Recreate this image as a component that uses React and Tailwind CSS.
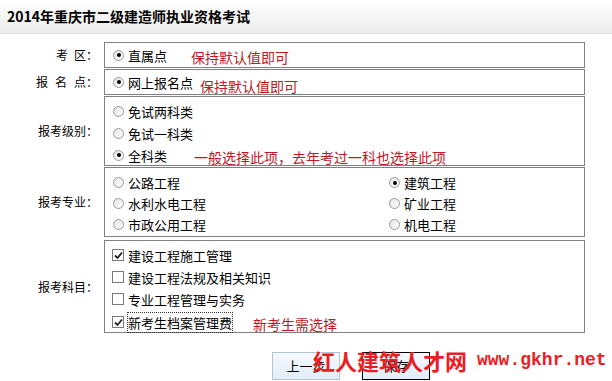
const Radio = ({ checked }) => (
  <span className="w-[11px] h-[11px] rounded-full border border-[#9a9a9a] bg-gradient-to-br from-[#e4e4e4] to-white flex items-center justify-center shrink-0">
    {checked && <span className="w-[4px] h-[4px] rounded-full bg-black" />}
  </span>
);

const Check = ({ checked }) => (
  <span className="w-[12px] h-[12px] border border-[#7a7a7a] bg-white flex items-center justify-center shrink-0">
    {checked && (
      <svg width="9" height="9" viewBox="0 0 9 9">
        <path d="M1 4.5 L3.5 7 L8 1.5" stroke="#222" strokeWidth="1.8" fill="none" />
      </svg>
    )}
  </span>
);

const Option = ({ type = 'radio', checked, label, dotted, h = 'h-[22px]' }) => (
  <div className={`flex items-center gap-[4px] ${h}`}>
    {type === 'radio' ? <Radio checked={checked} /> : <Check checked={checked} />}
    <span className={`text-[13px] text-black leading-none ${dotted ? 'outline-1 outline-dotted outline-[#333] py-[3px]' : ''}`}>{label}</span>
  </div>
);

const Note = ({ children, className = '' }) => (
  <span className={`text-[14px] text-[#c0181f] leading-none ${className}`}>{children}</span>
);

const Row = ({ label, box, className = '', children }) => (
  <div className={`flex ${className}`}>
    <div className="w-[104px] pr-[6px] flex items-center justify-end text-[12px] text-black">{label}</div>
    <div className={`w-[481px] border border-[#808080] bg-white ${box}`}>{children}</div>
  </div>
);

export default function App() {
  return (
    <div className="relative w-[612px] h-[381px] bg-white overflow-hidden" style={{ fontFamily: '"Noto Sans CJK SC", "Liberation Sans", sans-serif' }}>
      <div className="h-[34px] bg-gradient-to-b from-white to-[#ececec] border-b border-[#dedede] flex items-center pl-[7px]">
        <h1 className="text-[14px] font-bold text-black">2014年重庆市二级建造师执业资格考试</h1>
      </div>

      <div className="mt-[8px] flex flex-col gap-[1px]">
        <Row label={<><span className="tracking-[6px]">考</span>区：</>} box="h-[26px] flex items-center pl-[8px]">
          <Option checked label="直属点" />
          <Note className="ml-[24px] mt-[3px]">保持默认值即可</Note>
        </Row>
        <Row label={<><span className="tracking-[7px]">报名</span>点：</>} box="h-[26px] flex items-center pl-[8px]">
          <Option checked label="网上报名点" />
          <Note className="ml-[7px] mt-[8px]">保持默认值即可</Note>
        </Row>
        <Row label="报考级别：" box="h-[70px] pl-[8px] pt-[3px]">
          <Option label="免试两科类" />
          <Option label="免试一科类" />
          <div className="flex items-center">
            <Option checked label="全科类" />
            <Note className="ml-[27px] mt-[4px]">一般选择此项，去年考过一科也选择此项</Note>
          </div>
        </Row>
        <Row label="报考专业：" box="h-[70px] pl-[8px] pt-[4px] flex">
          <div className="w-[276px]">
            <Option label="公路工程" h="h-[21px]" />
            <Option label="水利水电工程" h="h-[21px]" />
            <Option label="市政公用工程" h="h-[21px]" />
          </div>
          <div>
            <Option checked label="建筑工程" h="h-[21px]" />
            <Option label="矿业工程" h="h-[21px]" />
            <Option label="机电工程" h="h-[21px]" />
          </div>
        </Row>
        <Row label="报考科目：" box="h-[93px] pl-[7px] pt-[3px]" className="mt-[2px]">
          <Option type="check" checked label="建设工程施工管理" />
          <Option type="check" label="建设工程法规及相关知识" />
          <Option type="check" label="专业工程管理与实务" />
          <div className="flex items-center mt-[1px]">
            <Option type="check" checked dotted label="新考生档案管理费" />
            <Note className="ml-[21px] mt-[4px]">新考生需选择</Note>
          </div>
        </Row>
      </div>

      <div className="mt-[19px] flex gap-[22px] pl-[272px]">
        <button className="w-[68px] h-[28px] border border-[#b5c3d0] bg-gradient-to-b from-[#f4f9fd] to-[#e2eef8] text-[13px] text-black">上一步</button>
        <button className="w-[68px] h-[28px] border border-black bg-gradient-to-b from-[#f4f9fd] to-[#e2eef8] text-[13px] text-black">保存</button>
      </div>

      <div className="absolute left-[313px] top-[349px] flex items-center text-[#ec1c24] font-bold whitespace-nowrap">
        <span className="text-[22px] leading-none">红人建筑人才网</span>
        <span className="ml-[10px] text-[18px] leading-none" style={{ fontFamily: '"Liberation Mono", monospace' }}>www.gkhr.net</span>
      </div>
    </div>
  );
}
